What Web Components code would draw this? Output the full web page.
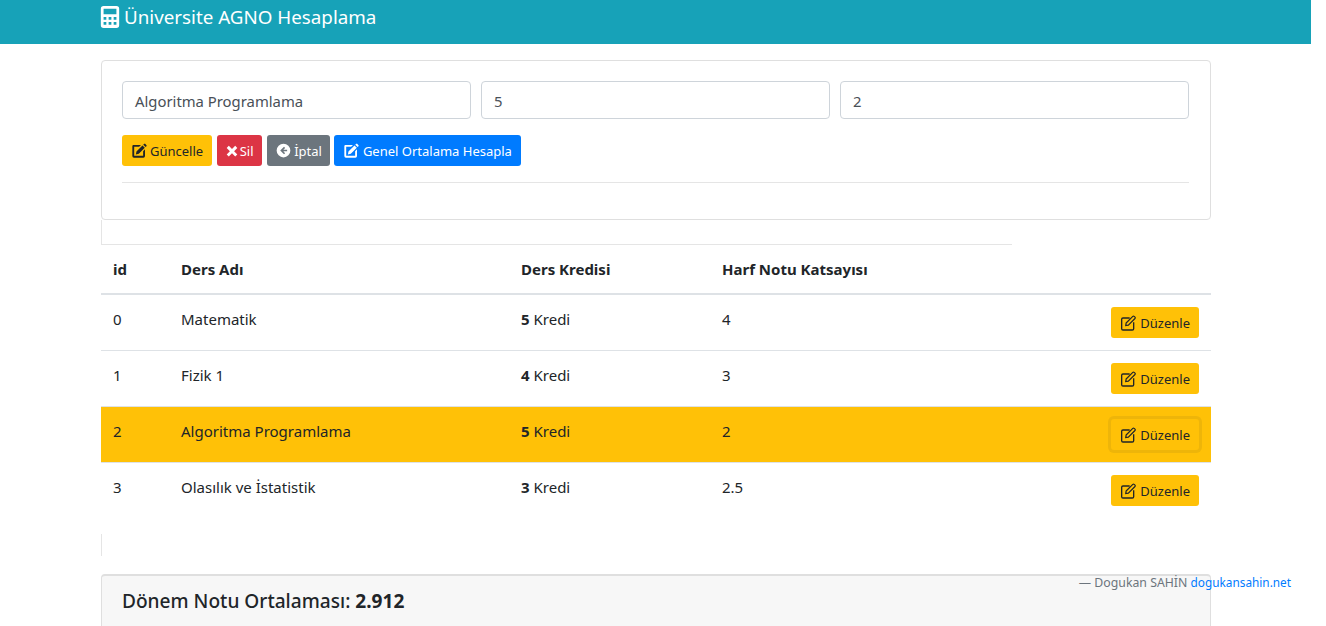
<!DOCTYPE html>
<html lang="tr">
<head>
<meta charset="utf-8">
<title>Üniversite AGNO Hesaplama</title>
<style>
    html, body { margin: 0; height: 626px; overflow: hidden; background: #fff; }
    body { font-family: "Noto Sans", "Liberation Sans", sans-serif; font-size: 15px; color: #212529; width: 1311px; position: relative; }
</style>
</head>
<body>
<app-navbar>Üniversite AGNO Hesaplama</app-navbar>
<page-container>
    <ders-form></ders-form>
    <ders-table></ders-table>
    <ortalama-card label="Dönem Notu Ortalaması:" value="2.912"></ortalama-card>
</page-container>
<page-credit></page-credit>

<script>
// Icon paths, drawn on a 24 unit box
const ICONS = {
    editSolid: '<path fill="currentColor" d="M3 3h12l-2.800 2.800H4.800v13.400h13.400v-6.900l2.800-2.800V19.500a2.500 2.500 0 0 1-2.500 2.500H4.500A2.500 2.500 0 0 1 2 19.500V5.500A2.500 2.500 0 0 1 3 3z"/><path fill="currentColor" d="M17.200 3.800l3.500 3.500-9 9-4.400.9.900-4.400zM18.400 2.600l1.300-1.300a1.100 1.100 0 0 1 1.500 0l2 2a1.100 1.100 0 0 1 0 1.500l-1.300 1.300z"/>',
    editLine: '<path fill="none" stroke="currentColor" stroke-width="2" d="M14.500 4.500H4.500a2 2 0 0 0-2 2v14a2 2 0 0 0 2 2h14a2 2 0 0 0 2-2V11"/><path fill="none" stroke="currentColor" stroke-width="1.800" d="M9.200 12l10-10a1.400 1.400 0 0 1 2 0l1.300 1.300a1.400 1.400 0 0 1 0 2l-10 10-3.900.6z"/>',
    times: '<path fill="currentColor" d="M6.500 3.200L12 8.700l5.500-5.500 3.600 3.600-5.500 5.500 5.500 5.500-3.600 3.600-5.500-5.500-5.500 5.500-3.600-3.600 5.500-5.500-5.500-5.500z"/>',
    arrowCircle: '<path fill="currentColor" fill-rule="evenodd" d="M12 1a11 11 0 1 1 0 22 11 11 0 0 1 0-22zM12.800 6l-6 6 6 6 1.800-1.800-2.900-2.900h6.100v-2.600h-6.100l2.900-2.900z"/>',
    calculator: '<path fill="currentColor" fill-rule="evenodd" d="M5 0h14a3 3 0 0 1 3 3v18a3 3 0 0 1-3 3H5a3 3 0 0 1-3-3V3a3 3 0 0 1 3-3zM5 3v6h14V3zM5 12v3h3v-3zM10.500 12v3h3v-3zM16 12v3h3v-3zM5 17.500v3h3v-3zM10.500 17.500v3h3v-3zM16 17.500v3h3v-3z"/>'
};

class AppIcon extends HTMLElement {
    connectedCallback() {
        const size = this.getAttribute('size') || '16';
        this.attachShadow({mode: 'open'}).innerHTML = `
            <style>
                :host { display: inline-flex; flex: none; }
                svg { display: block; }
            </style>
            <svg width="${size}" height="${size}" viewBox="0 0 24 24">${ICONS[this.getAttribute('name')]}</svg>`;
    }
}

class AppNavbar extends HTMLElement {
    constructor() {
        super();
        this.attachShadow({mode: 'open'}).innerHTML = `
            <style>
                :host { display: block; height: 44px; background: #17a2b8; color: #fff; padding-left: 99px; box-sizing: border-box; }
                .brand { display: flex; align-items: center; gap: 3px; height: 33px; font-size: 18.8px; }
            </style>
            <div class="brand"><app-icon name="calculator" size="22"></app-icon><span><slot></slot></span></div>`;
    }
}

class PageContainer extends HTMLElement {
    constructor() {
        super();
        this.attachShadow({mode: 'open'}).innerHTML = `
            <style>
                :host { display: block; width: 1110px; margin: 16px 0 0 101px; }
            </style>
            <slot></slot>`;
    }
}

class AppButton extends HTMLElement {
    constructor() {
        super();
        this.attachShadow({mode: 'open'}).innerHTML = `
            <style>
                :host { display: inline-flex; align-items: center; justify-content: center; box-sizing: border-box; height: 31px; padding: 0 9px; gap: 3px; border-radius: 3px; font-size: 13px; white-space: nowrap; }
                :host([variant="warning"]) { background: #ffc107; color: #212529; }
                :host([variant="danger"]) { background: #dc3545; color: #fff; }
                :host([variant="secondary"]) { background: #6c757d; color: #fff; }
                :host([variant="primary"]) { background: #007bff; color: #fff; }
                :host([focused]) { box-shadow: 0 0 0 3px rgba(222, 170, 12, .5); }
            </style>
            <slot></slot>`;
    }
}

class DersForm extends HTMLElement {
    constructor() {
        super();
        this.attachShadow({mode: 'open'}).innerHTML = `
            <style>
                :host { display: block; height: 160px; box-sizing: border-box; padding: 20px 21px 20px 20px; border: 1px solid #dfdfdf; border-radius: 4px; }
                .inputs { display: grid; grid-template-columns: repeat(3, 349px); gap: 10px; margin-bottom: 16px; }
                .input { height: 38px; box-sizing: border-box; display: flex; align-items: center; padding: 1px 12px 0; border: 1px solid #ced4da; border-radius: 4px; color: #495057; font-size: 14.85px; }
                .buttons { display: flex; gap: 5px; }
                hr { margin: 16px 0 0; border: 0; border-top: 1px solid #e5e5e5; }
            </style>
            <div class="inputs">
                <div class="input">Algoritma Programlama</div>
                <div class="input">5</div>
                <div class="input">2</div>
            </div>
            <div class="buttons">
                <app-button variant="warning"><app-icon name="editSolid"></app-icon>Güncelle</app-button>
                <app-button variant="danger" style="gap:1px;padding:0 8px 0 7px;width:45px"><app-icon name="times" size="14"></app-icon>Sil</app-button>
                <app-button variant="secondary" style="padding-right:8px"><app-icon name="arrowCircle" size="15"></app-icon>İptal</app-button>
                <app-button variant="primary" style="margin-left:-1px;gap:4px"><app-icon name="editSolid"></app-icon>Genel Ortalama Hesapla</app-button>
            </div>
            <hr>`;
    }
}

class DersTable extends HTMLElement {
    constructor() {
        super();
        const rows = [
            ['0', 'Matematik', '5', '4'],
            ['1', 'Fizik 1', '4', '3'],
            ['2', 'Algoritma Programlama', '5', '2', true],
            ['3', 'Olasılık ve İstatistik', '3', '2.5']
        ];
        const body = rows.map(([id, ad, kredi, katsayi, secili]) => `
            <div class="row${secili ? ' secili' : ''}">
                <div>${id}</div><div>${ad}</div><div><b>${kredi}</b> Kredi</div><div>${katsayi}</div>
                <div class="action"><app-button variant="warning" style="gap:4px" ${secili ? 'focused' : ''}><app-icon name="editLine"></app-icon>Düzenle</app-button></div>
            </div>`).join('');
        this.attachShadow({mode: 'open'}).innerHTML = `
            <style>
                :host { display: block; box-sizing: border-box; }
                .rule { height: 24px; width: 910px; border-left: 1px solid #e5e5e5; border-bottom: 1px solid #e5e5e5; }
                .row { display: grid; grid-template-columns: 68px 340px 201px 1fr 112px; height: 56px; box-sizing: border-box; padding: 0 12px; border-bottom: 1px solid #dee2e6; align-items: center; }
                .row > div { padding-bottom: 8px; }
                .row:last-child { border-bottom: 0; }
                .row:last-child > .action { padding-bottom: 1px; }
                .head { height: 50px; border-bottom: 2px solid #dee2e6; font-weight: 700; }
                .head > div { padding-bottom: 0; }
                .secili { background: #ffc107; }
                .row > .action { padding-bottom: 0; display: flex; justify-content: flex-end; }
                b { font-weight: 700; }
                .stub { height: 22px; margin: 15px 0 18px; border-left: 1px solid #e5e5e5; }
            </style>
            <div class="rule"></div>
            <div class="table">
                <div class="row head"><div>id</div><div>Ders Adı</div><div>Ders Kredisi</div><div>Harf Notu Katsayısı</div><div></div></div>
                ${body}
            </div>
            <div class="stub"></div>`;
    }
}

class OrtalamaCard extends HTMLElement {
    constructor() {
        super();
        this.attachShadow({mode: 'open'}).innerHTML = `
            <style>
                :host { display: block; height: 80px; box-sizing: border-box; padding: 12px 20px; background: #f7f7f7; border: 1px solid #dfdfdf; border-top-width: 2px; border-radius: 4px 4px 0 0; font-size: 19.1px; font-weight: 500; }
                b { font-weight: 700; }
            </style>
            ${this.getAttribute('label')} <b>${this.getAttribute('value')}</b>`;
    }
}

class PageCredit extends HTMLElement {
    constructor() {
        super();
        this.attachShadow({mode: 'open'}).innerHTML = `
            <style>
                :host { position: absolute; right: 20px; top: 574px; font-size: 12.3px; color: #6c757d; white-space: nowrap; }
                a { color: #007bff; text-decoration: none; font-size: 11.8px; }
            </style>
            — Dogukan SAHİN <a href="#">dogukansahin.net</a>`;
    }
}

customElements.define('app-icon', AppIcon);
customElements.define('app-navbar', AppNavbar);
customElements.define('page-container', PageContainer);
customElements.define('app-button', AppButton);
customElements.define('ders-form', DersForm);
customElements.define('ders-table', DersTable);
customElements.define('ortalama-card', OrtalamaCard);
customElements.define('page-credit', PageCredit);
</script>
</body>
</html>
